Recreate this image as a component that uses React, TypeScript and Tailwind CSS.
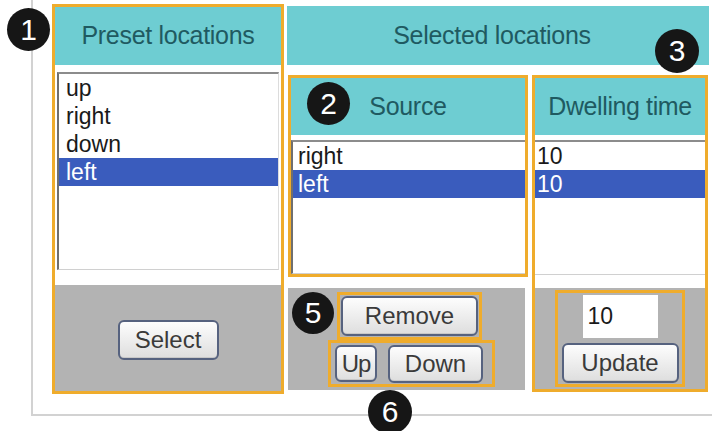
import React from "react";

const FONT = { fontFamily: '"Liberation Sans", Arial, sans-serif' };

function Badge({ n, className }: { n: string; className: string }) {
  return (
    <div
      className={`absolute flex items-center justify-center rounded-full bg-[#161616] text-white text-[30px] leading-none ${className}`}
    >
      {n}
    </div>
  );
}

function Btn({ label, className }: { label: string; className: string }) {
  return (
    <div
      className={`flex items-center justify-center rounded-[6px] border-2 border-[#56627f] bg-gradient-to-b from-[#fdfdfd] to-[#dedede] text-[24px] leading-none text-[#3a3a3a] shadow-[inset_0_-1px_0_#c8c8c8] ${className}`}
    >
      {label}
    </div>
  );
}

function Row({ text, sel, pad }: { text: string; sel?: boolean; pad: string }) {
  return (
    <div
      className={`h-[28px] flex items-center text-[23px] leading-none ${pad} ${
        sel ? "bg-[#3a5cbd] text-white" : "text-[#1a1a1a]"
      }`}
    >
      {text}
    </div>
  );
}

export default function App() {
  return (
    <div className="relative w-[712px] h-[431px] overflow-hidden bg-white" style={FONT}>
      <div className="ml-[31px] w-[681px] h-[416px] border-l-2 border-b-2 border-[#d2d2d2] pl-[19px] pt-[4px] flex items-start">
        {/* Column 1: preset */}
        <div className="w-[232px] h-[390px] border-[3px] border-[#efac2c] flex flex-col">
          <div className="h-[58px] bg-[#6ecdd2] flex items-center justify-center text-[25px] text-[#1f5a61] tracking-[-0.3px]">
            Preset locations
          </div>
          <div className="mt-[7px] mx-[2px] h-[198px] border-t-2 border-l-2 border-t-[#8c8c8c] border-l-[#6f6f6f] border-r border-b border-r-[#dcdcdc] border-b-[#d0d0d0] bg-white">
            <Row text="up" pad="pl-[7px]" />
            <Row text="right" pad="pl-[7px]" />
            <Row text="down" pad="pl-[7px]" />
            <Row text="left" sel pad="pl-[7px]" />
          </div>
          <div className="mt-[15px] flex-1 bg-[#b3b3b3] flex items-center justify-center">
            <Btn label="Select" className="w-[101px] h-[40px] mt-[4px]" />
          </div>
        </div>

        {/* Right area */}
        <div className="ml-[3px] mt-[2px] w-[422px] flex flex-col">
          <div className="h-[59px] bg-[#6ecdd2] flex items-center justify-center pr-[12px] text-[25px] text-[#1f5a61] tracking-[-0.3px]">
            Selected locations
          </div>
          <div className="mt-[10px] flex items-start">
            {/* Column 2 */}
            <div className="ml-[1px] w-[240px] flex flex-col">
              <div className="h-[202px] border-[3px] border-[#efac2c] flex flex-col">
                <div className="h-[57px] bg-[#6ecdd2] flex items-center justify-center text-[25px] text-[#1f5a61] tracking-[-0.3px]">
                  Source
                </div>
                <div className="mt-[5px] flex-1 border-t-2 border-l-2 border-t-[#8c8c8c] border-l-[#6f6f6f] border-b border-b-[#d0d0d0] bg-white">
                  <Row text="right" pad="pl-[5px]" />
                  <Row text="left" sel pad="pl-[5px]" />
                </div>
              </div>
              <div className="mt-[11px] w-[237px] h-[102px] bg-[#b3b3b3] flex flex-col items-start pt-[4px]">
                <div className="ml-[49px] w-[145px] h-[48px] border-[3px] border-[#efac2c] p-[1px]">
                  <Btn label="Remove" className="w-full h-full" />
                </div>
                <div className="ml-[40px] w-[167px] h-[47px] border-[3px] border-[#efac2c] flex items-center pl-[4px] gap-[11px]">
                  <Btn label="Up" className="w-[42px] h-[37px] text-[23px] tracking-[-1px]" />
                  <Btn label="Down" className="w-[95px] h-[38px]" />
                </div>
              </div>
            </div>

            {/* Column 3 */}
            <div className="ml-[4px] w-[176px] h-[317px] border-[3px] border-[#efac2c] flex flex-col">
              <div className="h-[57px] bg-[#6ecdd2] flex items-center justify-center text-[25px] text-[#1f5a61] tracking-[-0.4px] whitespace-nowrap">
                Dwelling time
              </div>
              <div className="mt-[5px] h-[135px] border-t-2 border-t-[#8c8c8c] border-b border-b-[#d0d0d0] bg-white">
                <Row text="10" pad="pl-[2px]" />
                <Row text="10" sel pad="pl-[2px]" />
              </div>
              <div className="mt-[13px] flex-1 bg-[#b3b3b3] flex justify-center pt-[2px]">
                <div className="w-[130px] h-[97px] border-[3px] border-[#efac2c] flex flex-col items-center pt-[2px]">
                  <div className="w-[75px] h-[43px] bg-white flex items-center pl-[5px] text-[23px] text-[#1a1a1a]">
                    10
                  </div>
                  <Btn label="Update" className="mt-[5px] w-[117px] h-[40px]" />
                </div>
              </div>
            </div>
          </div>
        </div>
      </div>

      <Badge n="1" className="left-[7px] top-[8px] w-[43px] h-[43px]" />
      <Badge n="3" className="left-[655px] top-[29px] w-[44px] h-[44px]" />
      <Badge n="2" className="left-[307px] top-[82px] w-[43px] h-[43px]" />
      <Badge n="5" className="left-[292px] top-[292px] w-[42px] h-[42px]" />
      <Badge n="6" className="left-[368px] top-[390px] w-[44px] h-[44px]" />
    </div>
  );
}
